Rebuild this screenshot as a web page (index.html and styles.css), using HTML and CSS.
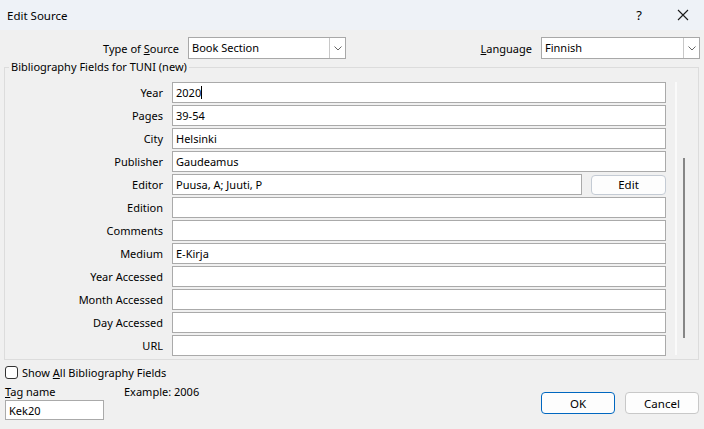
FILE: index.html
```html
<!DOCTYPE html>
<html>
<head>
<meta charset="utf-8">
<link rel="stylesheet" href="styles.css">
</head>
<body>
<div class="dialog">
  <div class="titlebar">
    <span class="title">Edit Source</span>
    <span class="help">?</span>
    <span class="close"><svg width="12" height="12" viewBox="0 0 12 12"><path d="M1 1L11 11M11 1L1 11" stroke="#1a1a1a" stroke-width="1.1" fill="none"/></svg></span>
  </div>

  <div class="toprow">
    <div class="topgroup left">
      <span class="lbl">Type of <u>S</u>ource</span>
      <div class="combo c1"><span class="cval">Book Section</span><span class="cbtn"><svg width="8" height="5" viewBox="0 0 8 5"><path d="M0.5 0.5L4 4L7.5 0.5" stroke="#666" stroke-width="1" fill="none"/></svg></span></div>
    </div>
    <div class="topgroup right">
      <span class="lbl"><u>L</u>anguage</span>
      <div class="combo c2"><span class="cval">Finnish</span><span class="cbtn"><svg width="8" height="5" viewBox="0 0 8 5"><path d="M0.5 0.5L4 4L7.5 0.5" stroke="#666" stroke-width="1" fill="none"/></svg></span></div>
    </div>
  </div>

  <fieldset class="group">
    <legend>Bibliography Fields for TUNI (new)</legend>
    <div class="groupbody">
      <div class="fields">
        <div class="row"><span class="flbl">Year</span><div class="input">2020<span class="caret"></span></div></div>
        <div class="row"><span class="flbl">Pages</span><div class="input">39-54</div></div>
        <div class="row"><span class="flbl">City</span><div class="input">Helsinki</div></div>
        <div class="row"><span class="flbl">Publisher</span><div class="input">Gaudeamus</div></div>
        <div class="row"><span class="flbl">Editor</span><div class="input">Puusa, A; Juuti, P</div><button class="btn editbtn">Edit</button></div>
        <div class="row"><span class="flbl">Edition</span><div class="input"></div></div>
        <div class="row"><span class="flbl">Comments</span><div class="input"></div></div>
        <div class="row"><span class="flbl">Medium</span><div class="input">E-Kirja</div></div>
        <div class="row"><span class="flbl">Year Accessed</span><div class="input"></div></div>
        <div class="row"><span class="flbl">Month Accessed</span><div class="input"></div></div>
        <div class="row"><span class="flbl">Day Accessed</span><div class="input"></div></div>
        <div class="row"><span class="flbl">URL</span><div class="input"></div></div>
      </div>
      <div class="scroll"><div class="thumb"></div></div>
    </div>
  </fieldset>

  <div class="bottom">
    <div class="bleft">
      <label class="check"><span class="box"></span><span>Show <u>A</u>ll Bibliography Fields</span></label>
      <div class="tagrow"><span class="taglbl"><u>T</u>ag name</span><span class="example">Example: 2006</span></div>
      <div class="input taginput">Kek20</div>
    </div>
    <div class="buttons">
      <button class="btn okbtn">OK</button>
      <button class="btn cancelbtn">Cancel</button>
    </div>
  </div>
</div>
</body>
</html>
```

FILE: styles.css
```css
* { box-sizing: border-box; }
html, body { margin: 0; padding: 0; }
body {
  width: 704px;
  height: 429px;
  overflow: hidden;
  background: #f0f0f0;
  font-family: "Noto Sans", "Open Sans", sans-serif;
  font-size: 11px;
  color: #000;
}
.dialog { width: 704px; height: 429px; }
.titlebar {
  height: 30px;
  background: #eef2f7;
  display: flex;
  align-items: center;
  padding-left: 7px;
}
.title { flex: 1; font-size: 11.5px; }
.help { width: 16px; text-align: center; font-size: 13px; margin-right: 30px; }
.close { width: 12px; height: 12px; margin-right: 15px; display: flex; }

.toprow {
  display: flex;
  justify-content: space-between;
  padding: 7px 4px 0 0;
  height: 29px;
}
.topgroup { display: flex; align-items: center; gap: 9px; }
.left { width: 346px; justify-content: flex-end; }
.combo {
  height: 22px;
  background: #fff;
  border: 1px solid #a8a8a8;
  display: flex;
  align-items: stretch;
}
.c1 { width: 158px; }
.c2 { width: 159px; }
.cval { flex: 1; padding-left: 3px; line-height: 20px; }
.cbtn {
  width: 16px;
  border-left: 1px solid #c8c8c8;
  display: flex;
  align-items: center;
  justify-content: center;
  background: #fff;
}

.group {
  margin: 0 5px 0 4px;
  padding: 0;
  border: 1px solid #dcdcdc;
  height: 301px;
  min-width: 0;
}
.group legend {
  margin-left: 4px;
  padding: 0 2px;
  line-height: 16px;
}
.groupbody { display: flex; padding-top: 7px; }
.fields { flex: 1; display: flex; flex-direction: column; gap: 2px; }
.row { display: flex; align-items: center; height: 21px; }
.flbl { width: 158px; text-align: right; margin-right: 9px; }
.input {
  height: 21px;
  flex: 1;
  background: #fff;
  border: 1px solid #aaaaaa;
  padding-left: 3px;
  line-height: 19px;
  white-space: nowrap;
}
.caret { display: inline-block; width: 1px; height: 13px; background: #000; vertical-align: -2px; }
.btn {
  font-family: inherit;
  font-size: 11.5px;
  background: #fdfdfd;
  border: 1px solid #d0d0d0;
  border-radius: 4px;
  padding: 0;
  color: #000;
}
.editbtn { width: 75px; height: 20px; margin-left: 9px; border-color: #c4cbd4; }
.scroll {
  width: 23px;
  margin-left: 9px;
  border-left: 2px solid #fafafa;
  height: 273px;
}
.thumb {
  width: 2px;
  height: 180px;
  background: #868686;
  margin-left: 6px;
  margin-top: 76px;
}

.bottom {
  display: flex;
  justify-content: space-between;
  padding: 5px 5px 0 5px;
}
.bleft { display: flex; flex-direction: column; }
.check { display: flex; align-items: center; height: 14px; }
.box {
  width: 13px;
  height: 13px;
  border: 1px solid #333;
  border-radius: 3px;
  background: #fff;
  margin-right: 4px;
}
.tagrow { display: flex; margin-top: 5px; height: 15px; line-height: 15px; }
.taglbl { width: 119px; }
.taginput { flex: none; width: 99px; height: 20px; margin-top: 1px; }
.buttons { display: flex; gap: 10px; align-items: flex-start; padding-top: 27px; }
.okbtn { width: 74px; height: 22px; border: 1px solid #0067c0; }
.cancelbtn { width: 74px; height: 22px; border-color: #c8c8c8; }
```
